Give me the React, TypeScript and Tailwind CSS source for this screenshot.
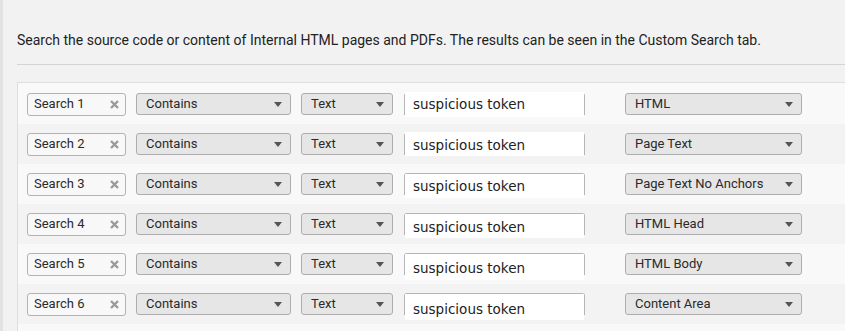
import React from "react";

type Row = {
  name: string;
  target: string;
  top: number; // white area top offset within the input cell
  height: number; // white area height
  pad: number; // text padding-top inside the white area
  showTop: boolean;
};

const rows: Row[] = [
  { name: "Search 1", target: "HTML", top: 8, height: 25, pad: 6, showTop: false },
  { name: "Search 2", target: "Page Text", top: 8, height: 24, pad: 7, showTop: false },
  { name: "Search 3", target: "Page Text No Anchors", top: 10, height: 24, pad: 6, showTop: true },
  { name: "Search 4", target: "HTML Head", top: 10, height: 24, pad: 7, showTop: true },
  { name: "Search 5", target: "HTML Body", top: 10, height: 26, pad: 8, showTop: true },
  { name: "Search 6", target: "Content Area", top: 10, height: 26, pad: 9, showTop: true },
];

function Caret() {
  return (
    <svg width="8" height="5" viewBox="0 0 8 5" className="shrink-0">
      <path d="M0 0h8L4 5z" fill="#555" />
    </svg>
  );
}

function Clear() {
  return (
    <svg width="9" height="9" viewBox="0 0 9 9" className="shrink-0">
      <path d="M1 1l7 7M8 1L1 8" stroke="#9a9a9a" strokeWidth="2.4" strokeLinecap="butt" />
    </svg>
  );
}

function Select({ label, width }: { label: string; width: string }) {
  return (
    <div
      className={`${width} h-[22px] flex items-center justify-between pl-[9px] pr-[8px] bg-[#e6e6e6] border border-[#adadad] rounded-[3px] text-[13px] text-[#2a2a2a]`}
    >
      <span>{label}</span>
      <Caret />
    </div>
  );
}

function TextCell({ row }: { row: Row }) {
  return (
    <div className="relative w-[181px] h-[40px] ml-[11px]">
      <div
        className={`absolute left-0 right-0 top-[9px] h-[22px] border-l border-r border-[#b5b5b5] rounded-t-[3px] ${
          row.showTop ? "border-t" : ""
        }`}
      />
      <div
        className="absolute left-[1px] right-[1px] bg-white pl-[8px] text-[13.5px] text-[#222] leading-none"
        style={{ top: row.top, height: row.height, paddingTop: row.pad }}
      >
        <span style={{ fontFamily: '"DejaVu Sans", sans-serif' }}>suspicious token</span>
      </div>
    </div>
  );
}

export default function App() {
  return (
    <div
      className="w-[845px] h-[331px] overflow-hidden bg-[#f2f2f2] border-l-[3px] border-[#e2e2e2]"
      style={{ fontFamily: "Roboto, sans-serif" }}
    >
      <div className="pl-[14px]">
        <p className="pt-[29px] text-[14px] text-[#222] leading-[22px]">
          Search the source code or content of Internal HTML pages and PDFs. The results can be seen in
          the Custom Search tab.
        </p>
        <div className="mt-[13px] border-t border-[#d4d4d4]" />
        <div className="mt-[17px] border-t border-l border-[#dedede] bg-[#f9f9f9] pl-[9px] pt-[1px] pb-[8px]">
          {rows.map((row, i) => (
            <div
              key={row.name}
              className={`flex items-center h-[40px] -ml-[9px] pl-[9px] ${
                i % 2 === 1 ? "bg-[#f3f3f3]" : "bg-[#f9f9f9]"
              }`}
            >
              <div className="w-[99px] h-[23px] flex items-center justify-between pl-[6px] pr-[6px] border border-[#b3b3b3] rounded-[3px] bg-[#f8f8f8] text-[13px] text-[#2a2a2a]">
                <span>{row.name}</span>
                <Clear />
              </div>
              <div className="ml-[10px]">
                <Select label="Contains" width="w-[155px]" />
              </div>
              <div className="ml-[10px]">
                <Select label="Text" width="w-[92px]" />
              </div>
              <TextCell row={row} />
              <div className="ml-[40px]">
                <Select label={row.target} width="w-[177px]" />
              </div>
            </div>
          ))}
        </div>
      </div>
    </div>
  );
}
